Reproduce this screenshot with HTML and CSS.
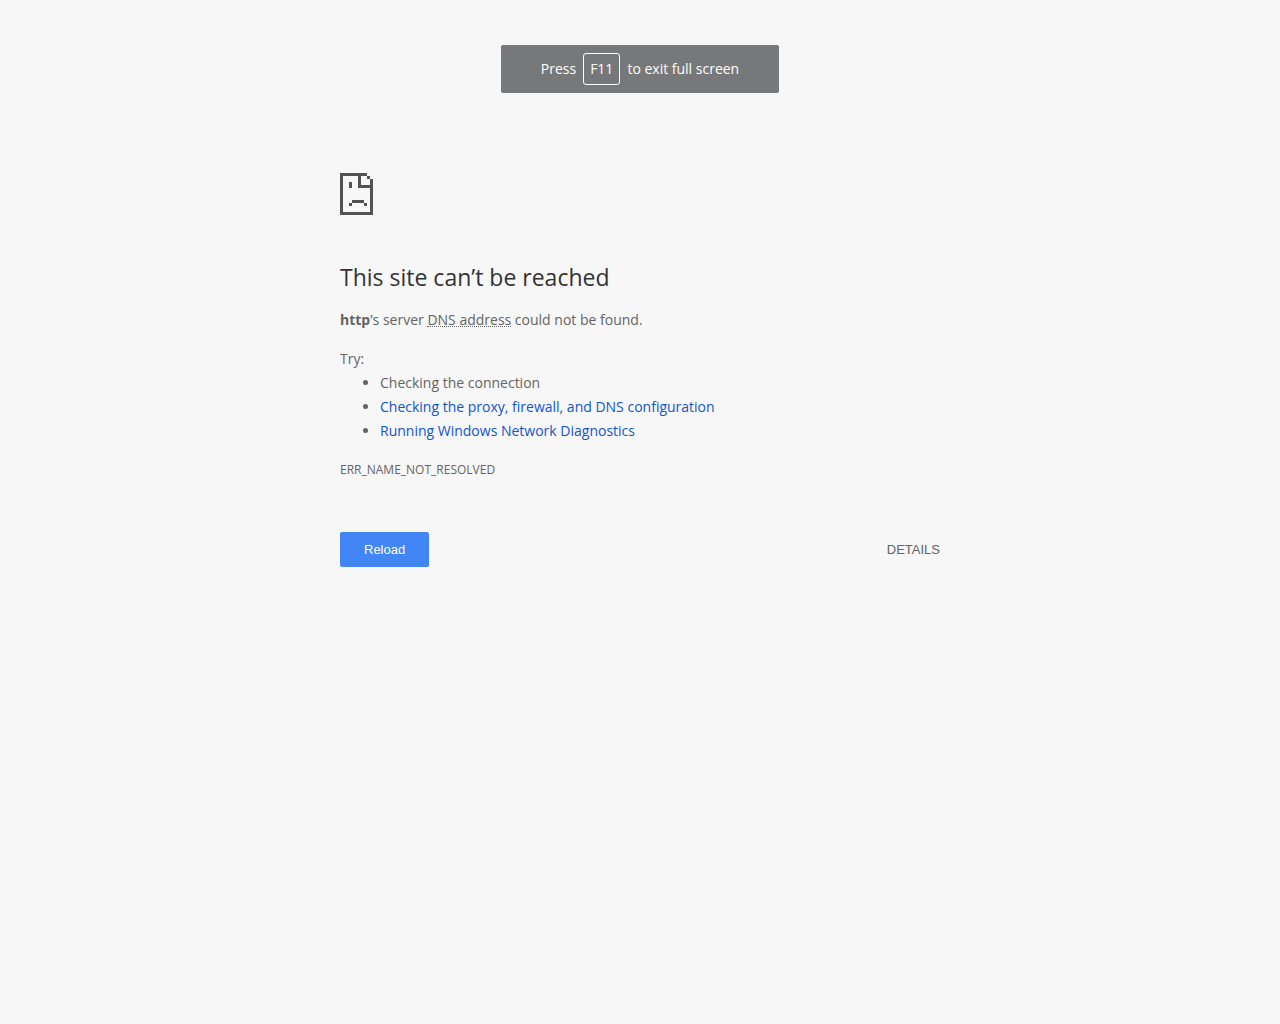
FILE: index.html
```html
<!DOCTYPE html>
<html lang="en">
<head>
    <meta charset="utf-8">
    <title>This site can’t be reached</title>
    <meta name="viewport" content="width=device-width, initial-scale=1">
    <link rel="stylesheet" href="styles.css">
</head>
<body>
    <div class="fullscreen-bubble">
        <span>Press</span>
        <kbd class="key">F11</kbd>
        <span>to exit full screen</span>
    </div>

    <main class="interstitial">
        <!-- Sad page icon, drawn on an 11 x 14 grid -->
        <svg class="icon" viewBox="0 0 11 14" shape-rendering="crispEdges" aria-hidden="true">
            <path d="M0 0h9v1h1v1h1v12H0zM1 1v12h9V5H6V1zM7 1v3h3V2H9V1z" fill-rule="evenodd"/>
            <path d="M3 3h1v2H3zM4 9h4v1H4zM3 10h1v1H3zM8 10h1v1H8z"/>
        </svg>

        <h1>This site can’t be reached</h1>
        <p><strong>http</strong>’s server <abbr>DNS address</abbr> could not be found.</p>

        <div class="suggestions">
            <p>Try:</p>
            <ul>
                <li>Checking the connection</li>
                <li><a href="#">Checking the proxy, firewall, and DNS configuration</a></li>
                <li><a href="#">Running Windows Network Diagnostics</a></li>
            </ul>
        </div>

        <div class="error-code">ERR_NAME_NOT_RESOLVED</div>

        <div class="buttons">
            <button class="reload" type="button">Reload</button>
            <button class="details" type="button">Details</button>
        </div>
    </main>
</body>
</html>
```
FILE: styles.css
```css
body {
    margin: 0;
    background-color: #f7f7f7;
    color: #646464;
    font-family: "Open Sans", "Noto Sans", sans-serif;
    font-size: 14px;
    line-height: 24px;
}

/* Full screen notice */
.fullscreen-bubble {
    display: flex;
    align-items: center;
    justify-content: center;
    gap: 7px;
    box-sizing: border-box;
    width: fit-content;
    height: 48px;
    margin: 45px auto 0;
    padding: 0 40px;
    border-radius: 2px;
    background-color: #77787a;
    color: #fff;
}

.key {
    padding: 3px 6px;
    border: 1px solid #fff;
    border-radius: 3px;
    font-family: inherit;
}

/* Error page */
.interstitial {
    box-sizing: border-box;
    max-width: 600px;
    margin: 80px auto 0;
}

.icon {
    display: block;
    width: 33px;
    height: 42px;
    fill: #535353;
}

h1 {
    margin: 48px 0 16px;
    color: #333;
    font-size: 23px;
    font-weight: 400;
    line-height: 29px;
}

p {
    margin: 0;
}

abbr {
    display: inline-block;
    border-bottom: 1px dotted #646464;
    line-height: 13px;
}

.suggestions {
    margin-top: 15px;
}

ul {
    margin: 0;
    padding-left: 40px;
}

a {
    color: #1155cc;
    text-decoration: none;
}

.error-code {
    margin-top: 15px;
    font-size: 12px;
}

.buttons {
    display: flex;
    align-items: center;
    justify-content: space-between;
    margin-top: 50px;
}

button {
    height: 35px;
    border: none;
    border-radius: 2px;
    font-family: "Liberation Sans", Arial, sans-serif;
    font-size: 13px;
    cursor: pointer;
}

.reload {
    padding: 0 24px;
    background-color: #4285f4;
    color: #fff;
}

.details {
    padding: 0;
    background: none;
    color: #646464;
    text-transform: uppercase;
}

@media screen and (max-width: 640px) {
    .interstitial {
        padding: 0 20px;
    }
}
```
